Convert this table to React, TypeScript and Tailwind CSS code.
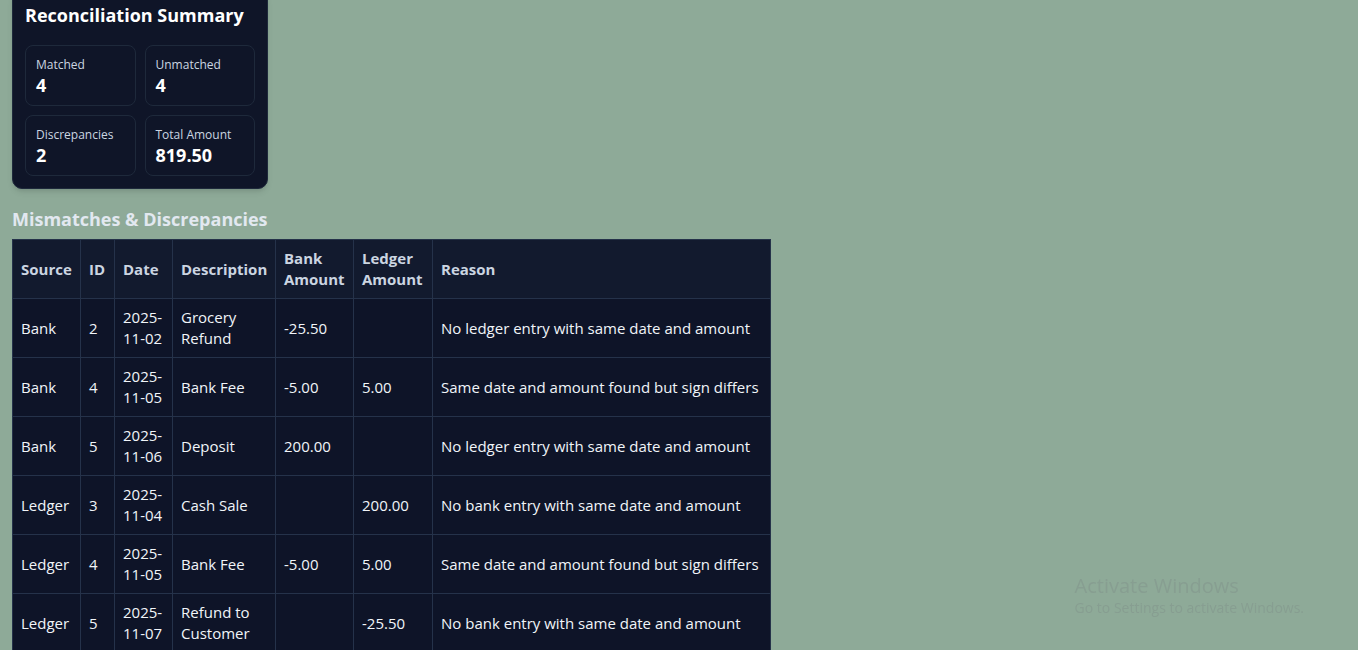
import { useLayoutEffect, useRef } from "react";

const stats = [
  { label: "Matched", value: "4" },
  { label: "Unmatched", value: "4" },
  { label: "Discrepancies", value: "2" },
  { label: "Total Amount", value: "819.50" },
];

const rows = [
  { source: "Bank", id: "2", date: "2025-11-02", desc: "Grocery Refund", bank: "-25.50", ledger: "", reason: "No ledger entry with same date and amount" },
  { source: "Bank", id: "4", date: "2025-11-05", desc: "Bank Fee", bank: "-5.00", ledger: "5.00", reason: "Same date and amount found but sign differs" },
  { source: "Bank", id: "5", date: "2025-11-06", desc: "Deposit", bank: "200.00", ledger: "", reason: "No ledger entry with same date and amount" },
  { source: "Ledger", id: "3", date: "2025-11-04", desc: "Cash Sale", bank: "", ledger: "200.00", reason: "No bank entry with same date and amount" },
  { source: "Ledger", id: "4", date: "2025-11-05", desc: "Bank Fee", bank: "-5.00", ledger: "5.00", reason: "Same date and amount found but sign differs" },
  { source: "Ledger", id: "5", date: "2025-11-07", desc: "Refund to Customer", bank: "", ledger: "-25.50", reason: "No bank entry with same date and amount" },
];

export default function App() {
  const cardRef = useRef<HTMLDivElement>(null);

  // the page is shown scrolled down so the summary card sits just under the top edge
  useLayoutEffect(() => {
    if (cardRef.current) {
      window.scrollTo(0, cardRef.current.offsetTop + 10);
    }
  }, []);

  return (
    <div className="min-h-screen bg-[#8eaa98] px-3 pt-3 pb-6 font-['Segoe_UI','Open_Sans',sans-serif] text-[#e2e8f0]">
      {/* Page header (scrolled out of view) */}
      <div className="mb-4">
        <h1 className="text-2xl font-bold text-[#0f172a]">Bank Reconciliation</h1>
        <p className="mt-2 text-sm text-[#1e293b]">Upload bank and ledger CSV files to compare entries.</p>
      </div>

      {/* Summary card */}
      <div
        ref={cardRef}
        className="w-[256px] rounded-[10px] border border-[#1e293b] bg-[#0f1528] px-3 pt-3 pb-3 shadow-md"
      >
        <h2 className="text-[18px] leading-6 font-bold text-white">Reconciliation Summary</h2>
        <div className="mt-[18px] grid grid-cols-2 gap-[9px]">
          {stats.map((s) => (
            <div key={s.label} className="h-[61px] rounded-lg border border-[#1e293b] px-[10px] pt-[11px]">
              <div className="text-[12px] leading-4 text-[#cbd5e1]">{s.label}</div>
              <div className="text-[18px] leading-6 font-bold text-white">{s.value}</div>
            </div>
          ))}
        </div>
      </div>

      {/* Mismatches */}
      <h2 className="mt-[18px] mb-2 text-[18px] leading-6 font-bold text-[#e2e8f0]">Mismatches &amp; Discrepancies</h2>
      <table className="w-[759px] table-fixed border-collapse border border-[#25324a] text-[15px] leading-[21px]">
        <colgroup>
          <col className="w-[68px]" />
          <col className="w-[34px]" />
          <col className="w-[58px]" />
          <col className="w-[103px]" />
          <col className="w-[78px]" />
          <col className="w-[79px]" />
          <col />
        </colgroup>
        <thead>
          <tr className="bg-[#121a2e] text-left text-[#cbd5e1]">
            {["Source", "ID", "Date", "Description", "Bank Amount", "Ledger Amount", "Reason"].map((h) => (
              <th key={h} className="border border-[#25324a] px-2 py-2 font-bold">
                {h}
              </th>
            ))}
          </tr>
        </thead>
        <tbody>
          {rows.map((r, i) => (
            <tr key={i} className="h-[59px] bg-[#0e1428] text-[#f1f5f9]">
              <td className="border border-[#25324a] px-2 py-2">{r.source}</td>
              <td className="border border-[#25324a] px-2 py-2">{r.id}</td>
              <td className="border border-[#25324a] px-2 py-2">{r.date}</td>
              <td className="border border-[#25324a] px-2 py-2">{r.desc}</td>
              <td className="border border-[#25324a] px-2 py-2">{r.bank}</td>
              <td className="border border-[#25324a] px-2 py-2">{r.ledger}</td>
              <td className="border border-[#25324a] px-2 py-2 whitespace-nowrap">{r.reason}</td>
            </tr>
          ))}
        </tbody>
      </table>

      {/* OS watermark */}
      <div className="pointer-events-none fixed right-[54px] bottom-[32px] text-[#879e91]">
        <div className="text-[20px] leading-6">Activate Windows</div>
        <div className="text-[14px] leading-5">Go to Settings to activate Windows.</div>
      </div>
    </div>
  );
}
